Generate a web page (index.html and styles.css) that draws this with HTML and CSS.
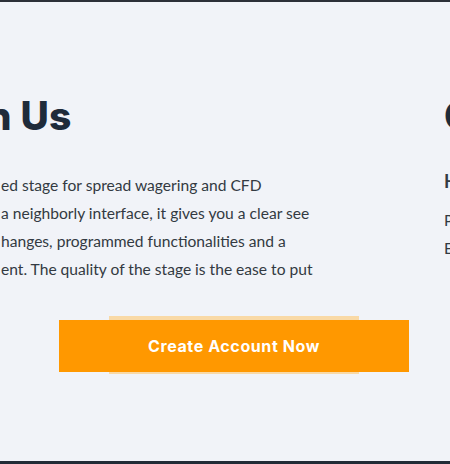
FILE: index.html
```html
<!DOCTYPE html>
<html lang="en">
<head>
<meta charset="utf-8">
<title>Join Us</title>
<link rel="stylesheet" href="styles.css">
</head>
<body>
<div class="topbar"></div>
<section class="about">
  <div class="col col-main">
    <h2 class="title"><span class="cut">Join</span> Us</h2>
    <p class="text">
      <span class="line">ed stage for spread wagering and CFD</span>
      <span class="line">a neighborly interface, it gives you a clear see</span>
      <span class="line">hanges, programmed functionalities and a</span>
      <span class="line">ent. The quality of the stage is the ease to put</span>
    </p>
    <div class="cta">
      <a class="btn" href="#">Create Account Now</a>
    </div>
  </div>
  <div class="col col-side">
    <h2 class="title">Contact</h2>
    <h4 class="sub">Head Office</h4>
    <p class="text side-text">
      <span class="line">Phone: +44 20 7946 0000</span>
      <span class="line">Email: support@example.com</span>
    </p>
  </div>
</section>
<footer class="footer"></footer>
</body>
</html>
```

FILE: styles.css
```css
* { box-sizing: border-box; }
html, body { margin: 0; padding: 0; }
body {
  width: 450px;
  height: 464px;
  overflow: hidden;
  background: #f1f3f8;
  font-family: "Lato", "Liberation Sans", sans-serif;
  color: #333a42;
}
.topbar {
  height: 2px;
  background: #2c3038;
}
.about {
  height: 459px;
  display: flex;
  padding-top: 90px;
  overflow: hidden;
}
.col-main {
  flex: 0 0 444px;
}
.col-side {
  flex: 0 0 300px;
}
.title {
  margin: 0;
  font-family: "Inter", "Liberation Sans", sans-serif;
  font-weight: 800;
  font-size: 39px;
  line-height: 48px;
  color: #1f2b3a;
  white-space: nowrap;
  letter-spacing: 0.2px;
}
.col-main .title {
  margin-left: -72px;
}
.text {
  margin: 31px 0 0;
  font-size: 15.6px;
  line-height: 28px;
  color: #333a42;
}
.line {
  display: block;
  white-space: nowrap;
}
.col-main .text {
  padding-left: 1px;
}
.cta {
  position: relative;
  z-index: 0;
  margin-top: 37px;
  padding-left: 59px;
}
.btn {
  position: relative;
  display: flex;
  align-items: center;
  justify-content: center;
  width: 350px;
  height: 52px;
  background: #ff9800;
  color: #ffffff;
  font-family: "Inter", "Liberation Sans", sans-serif;
  font-weight: 700;
  font-size: 16px;
  letter-spacing: 0.6px;
  text-decoration: none;
}
.btn::before {
  content: "";
  position: absolute;
  left: 50px;
  right: 50px;
  top: -4px;
  bottom: -2px;
  background: #f9d9a6;
  z-index: -1;
}
.sub {
  margin: 29px 0 0;
  font-size: 18px;
  font-weight: 700;
  line-height: 24px;
  color: #333a42;
}
.side-text {
  margin-top: 13px;
}
.footer {
  height: 3px;
  background: #222b36;
}
```
